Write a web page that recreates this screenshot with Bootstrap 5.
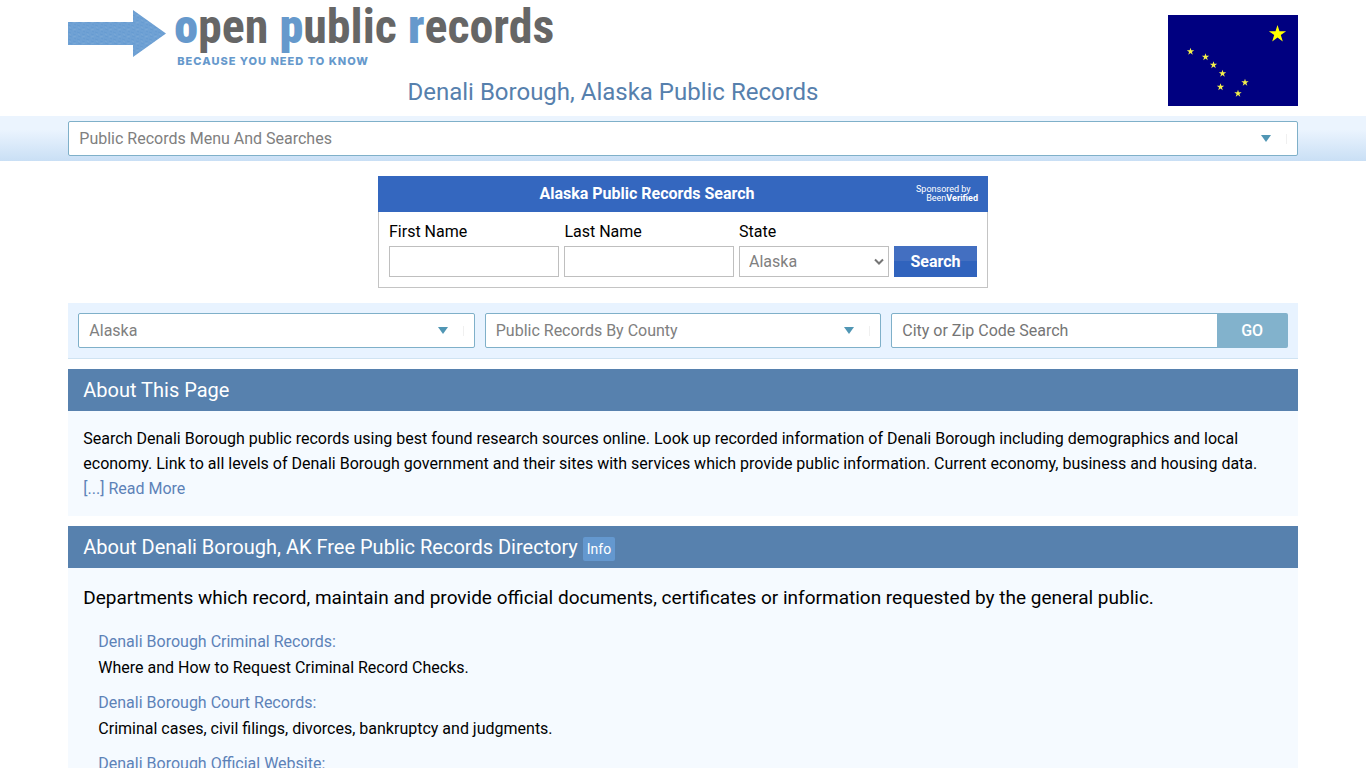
<!DOCTYPE html>
<html lang="en">
<head>
<meta charset="utf-8">
<meta name="viewport" content="width=device-width, initial-scale=1">
<title>Denali Borough, Alaska Public Records</title>
<link rel="stylesheet" href="https://cdn.jsdelivr.net/npm/bootstrap@5.3.0/dist/css/bootstrap.min.css">
<style>
  body { font: 16px/25px Roboto, sans-serif; color: #000; }
  a { color: #5d82b8; text-decoration: none; }
  a:hover { text-decoration: underline; }
  .wrap { width: 90%; margin: 0 auto; }
  .site-head { min-height: 116px; gap: 10px; }
  .brand-arrow { width: 98px; height: 47px; margin-top: 10px; }
  .brand-name { font: bold 48px/54px "Liberation Sans Narrow", "Roboto Condensed", sans-serif; color: #666; }
  .brand-name b, .brand-tag { color: #6699cc; }
  .brand-tag { font: 800 11px/14px Inter, sans-serif; letter-spacing: 1px; padding-left: 3px; }
  .page-title { font-size: 24px; line-height: 28px; font-weight: 400; color: #5680ad; margin: 10px 0 0; }
  .flag { width: 130px; height: 91px; margin-top: 15px; }
  .menu-bar { background: linear-gradient(#ebf4fe 30%, #c9dff5); padding: 5px 0; }
  .form-select.pick, .form-control.pick { height: 35px; border: 1px solid #7fb0c9; border-radius: 2px; padding: 0 10px; font-size: 16px; line-height: 24px; color: #808080; }
  .form-select.pick { padding-right: 40px; background: #fff url("data:image/svg+xml,%3Csvg xmlns='http://www.w3.org/2000/svg' width='26' height='10'%3E%3Cpath d='M0 1h10L5 8z' fill='%235096b4'/%3E%3Cpath d='M25.500 0v10' stroke='%23f0f0f0'/%3E%3C/svg%3E") no-repeat right 10px center / 26px 10px; }
  .form-control.pick::placeholder { color: #757575; }
  .person-search { width: 610px; max-width: 100%; margin: 15px auto; }
  .person-head { background: #3467bf; color: #fff; height: 36px; padding-right: 10px; }
  .person-head h2 { font-size: 16px; line-height: 24px; font-weight: 700; }
  .sponsor { width: 62px; font: 9px/9px Roboto, sans-serif; color: #fff; white-space: nowrap; }
  .person-body { border: 1px solid #c4c4c4; border-top: 0; padding: 7px 10px 10px; gap: 5px; }
  .person-body label { line-height: 25px; margin-bottom: 2px; }
  .plain.form-control, .plain.form-select { height: 31px; border: 1px solid #bfbfbf; border-radius: 0; color: #808080; padding: 0 9px; font-size: 16px; line-height: 24px; }
  .plain.form-select { background: #fff url("data:image/svg+xml,%3Csvg xmlns='http://www.w3.org/2000/svg' width='10' height='8'%3E%3Cpath d='M1 1.500l4 4 4-4' fill='none' stroke='%23757575' stroke-width='2'/%3E%3C/svg%3E") no-repeat right 4px center / 10px 8px; }
  .state-field { width: 150px; }
  .btn-find { width: 83px; height: 31px; padding: 0; border: 0; border-radius: 0; color: #fff; font-weight: 700; background: linear-gradient(#436fc1 50%, #3063bd 50%); }
  .btn-find:hover, .btn-go:hover, .btn-info-tag:hover { color: #fff; }
  .place-bar { display: grid; grid-template-columns: repeat(3, minmax(0, 1fr)); background: #e8f3ff; border-bottom: 1px solid #cfe3f2; padding: 10px; gap: 10px; }
  .btn-go { width: 71px; height: 35px; padding: 0; border: 0; border-radius: 2px; background: #82b2cc; color: #fff; font-weight: 500; }
  .btn-go:hover { background: #6ea1bd; }
  .info-panel { margin-top: 10px; background: #f5faff; }
  .info-panel > h2 { background: #5781ae; color: #fff; font-size: 20px; line-height: 42px; font-weight: 400; margin: 0; padding: 0 15px; }
  .panel-text { padding: 15px; }
  .btn-info-tag { background: #6498cf; color: #fff; border: 0; border-radius: 2px; font-size: 14px; line-height: 24px; padding: 0 4px; }
  .intro { font-size: 19px; line-height: 30px; margin-bottom: 16px; }
  .records { padding-left: 15px; line-height: 26px; margin: 0; }
  .records dt { font-weight: 400; }
  .records dd { margin-bottom: 9px; }
</style>
</head>
<body>
<header class="wrap site-head d-flex">
  <div class="flex-grow-1">
    <a href="#" class="d-flex gap-2 text-decoration-none" aria-label="open public records">
      <svg class="brand-arrow flex-shrink-0" viewBox="0 0 98 47" aria-hidden="true">
        <defs>
          <pattern id="grain" width="9" height="7" patternUnits="userSpaceOnUse">
            <rect width="9" height="7" fill="#6fa1d4"/>
            <path d="M0 1l3 1M5 3l3 1M1 5l3 1M6 0l2 1" stroke="#669bd1"/>
            <path d="M1 3l2 1M5 6l3-1" stroke="#7aa8d6"/>
          </pattern>
        </defs>
        <path d="M0 12h65V0l33 23.500L65 47V35H0z" fill="url(#grain)"/>
      </svg>
      <span>
        <span class="brand-name d-block text-nowrap"><b>o</b>pen <b>p</b>ublic <b>r</b>ecords</span>
        <span class="brand-tag d-block">BECAUSE YOU NEED TO KNOW</span>
      </span>
    </a>
    <h1 class="page-title text-center">Denali Borough, Alaska Public Records</h1>
  </div>
  <svg class="flag flex-shrink-0" viewBox="0 0 130 91" role="img" aria-label="Flag of Alaska">
    <defs><path id="star" d="M0-9l2 6.200h6.600L3.300 1.100l2 6.300L0 3.500l-5.300 3.900 2-6.300L-8.600-2.800H-2z"/></defs>
    <rect width="130" height="91" fill="#000080"/>
    <use href="#star" x="109.500" y="19" fill="#ff0"/>
    <g fill="#f3f04a">
      <use href="#star" transform="translate(22.500 36.500) scale(.43)"/>
      <use href="#star" transform="translate(37.500 42) scale(.43)"/>
      <use href="#star" transform="translate(45.500 50) scale(.43)"/>
      <use href="#star" transform="translate(54.500 58.500) scale(.43)"/>
      <use href="#star" transform="translate(52.500 72) scale(.43)"/>
      <use href="#star" transform="translate(70 78.500) scale(.43)"/>
      <use href="#star" transform="translate(77 67.500) scale(.43)"/>
    </g>
  </svg>
</header>

<nav class="menu-bar">
  <div class="wrap">
    <select class="form-select pick" aria-label="Public records menu"><option>Public Records Menu And Searches</option></select>
  </div>
</nav>

<main class="wrap">
  <form class="person-search">
    <div class="person-head d-flex align-items-center">
      <h2 class="flex-grow-1 text-center mb-0">Alaska Public Records Search</h2>
      <a href="#" class="sponsor">Sponsored by<span class="d-block text-end">Been<b>Verified</b></span></a>
    </div>
    <div class="person-body d-flex flex-wrap align-items-end">
      <div class="flex-fill"><label class="d-block" for="first">First Name</label><input id="first" type="text" class="form-control plain" size="1"></div>
      <div class="flex-fill"><label class="d-block" for="last">Last Name</label><input id="last" type="text" class="form-control plain" size="1"></div>
      <div class="state-field"><label class="d-block" for="state">State</label><select id="state" class="form-select plain"><option>Alaska</option></select></div>
      <button type="submit" class="btn btn-find">Search</button>
    </div>
  </form>

  <form class="place-bar">
    <select class="form-select pick" aria-label="State records"><option>Alaska</option></select>
    <select class="form-select pick" aria-label="County"><option>Public Records By County</option></select>
    <div class="input-group flex-nowrap">
      <input type="text" class="form-control pick" placeholder="City or Zip Code Search" aria-label="City or Zip Code Search">
      <button type="submit" class="btn btn-go">GO</button>
    </div>
  </form>

  <section class="info-panel">
    <h2>About This Page</h2>
    <div class="panel-text">Search Denali Borough public records using best found research sources online. Look up recorded information of Denali Borough including demographics and local economy. Link to all levels of Denali Borough government and their sites with services which provide public information. Current economy, business and housing data. <a href="#" class="text-nowrap">[...] Read More</a></div>
  </section>

  <section class="info-panel">
    <h2>About Denali Borough, AK Free Public Records Directory <button type="button" class="btn btn-info-tag">Info</button></h2>
    <div class="panel-text">
      <p class="intro">Departments which record, maintain and provide official documents, certificates or information requested by the general public.</p>
      <dl class="records">
        <dt><a href="#">Denali Borough Criminal Records:</a></dt>
        <dd>Where and How to Request Criminal Record Checks.</dd>
        <dt><a href="#">Denali Borough Court Records:</a></dt>
        <dd>Criminal cases, civil filings, divorces, bankruptcy and judgments.</dd>
        <dt><a href="#">Denali Borough Official Website:</a></dt>
      </dl>
    </div>
  </section>
</main>
<script src="https://cdn.jsdelivr.net/npm/bootstrap@5.3.0/dist/js/bootstrap.bundle.min.js"></script>
</body>
</html>
